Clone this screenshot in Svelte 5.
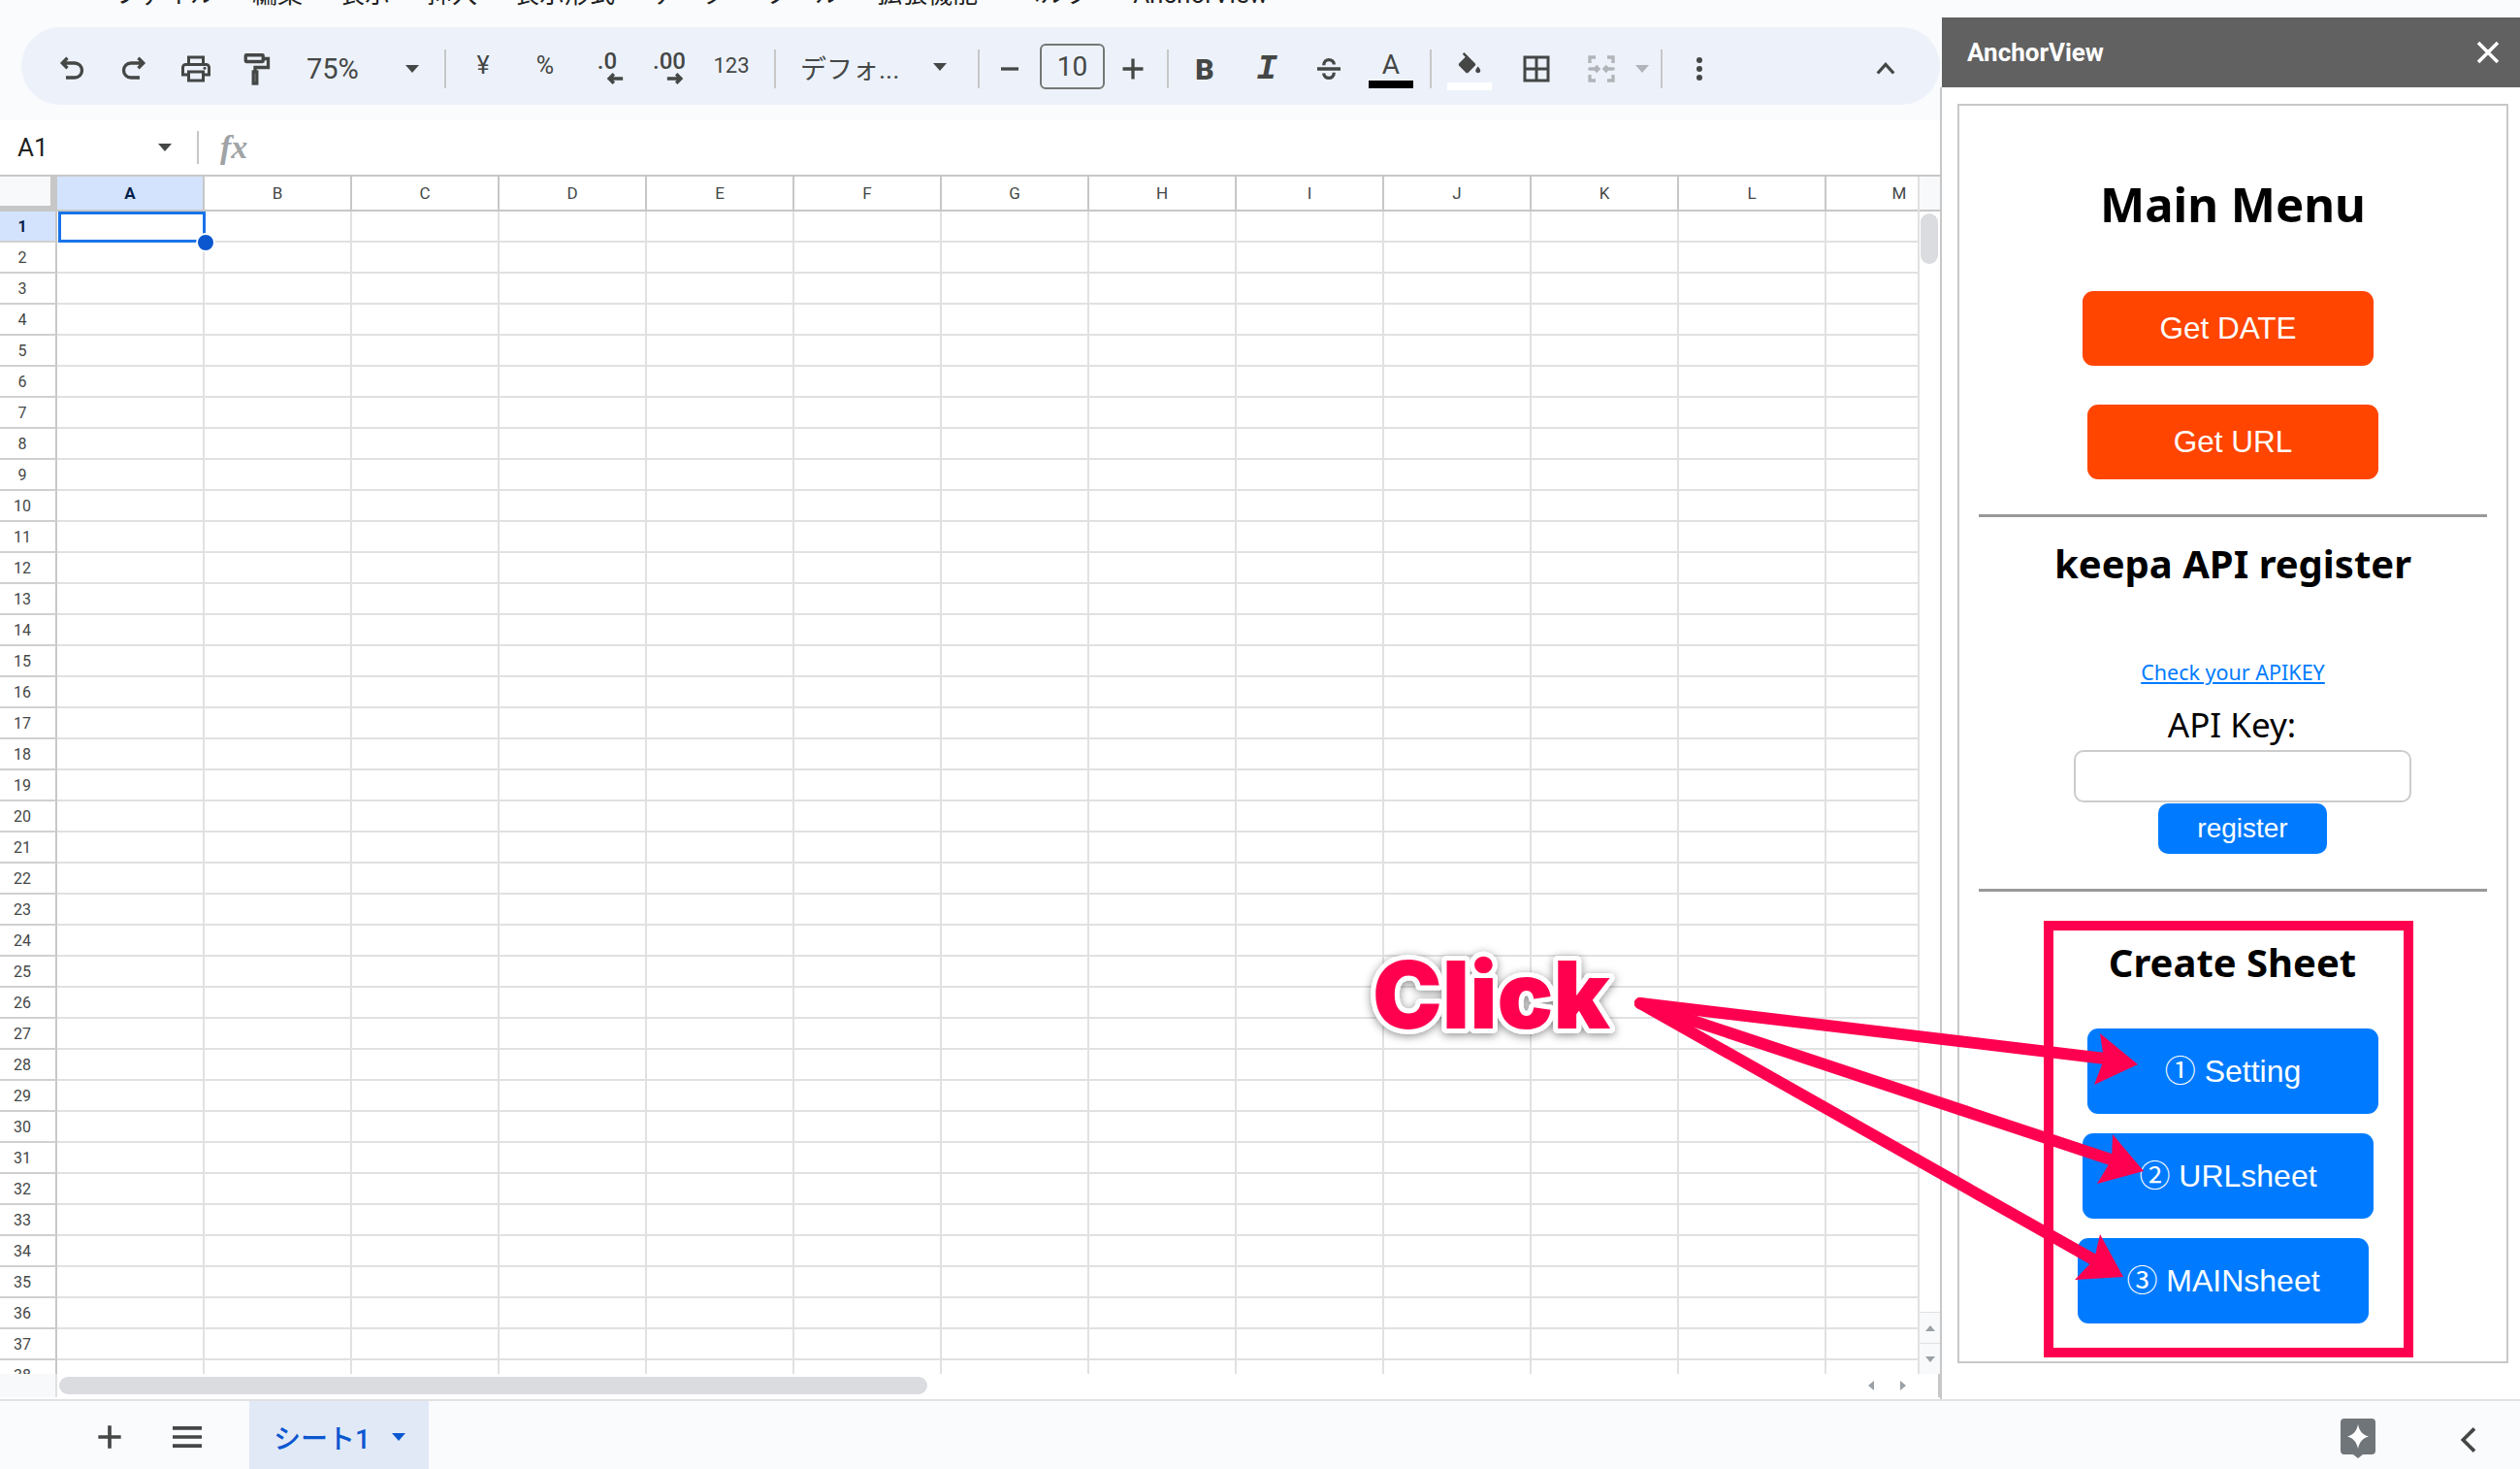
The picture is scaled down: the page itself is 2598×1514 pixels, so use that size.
<script lang="ts">
  const menus = ['ファイル', '編集', '表示', '挿入', '表示形式', 'データ', 'ツール', '拡張機能', 'ヘルプ', 'AnchorView'];
  const columns = 'ABCDEFGHIJKLM'.split('');
  const rows = Array.from({ length: 38 }, (_, i) => i + 1);
  const sheetButtons = [
    { label: '① Setting', cls: 'offset-a' },
    { label: '② URLsheet', cls: 'offset-b' },
    { label: '③ MAINsheet', cls: 'offset-c' }
  ];
</script>

<div class="app">
  <div class="main">
    <div class="sheet">
      <div class="top">
        <div class="menu">
          {#each menus as menu}
            <span>{menu}</span>
          {/each}
        </div>
        <div class="toolbar">
          <button class="tool">
            <svg viewBox="0 0 24 24" class="stroke"><path d="M9 4.500 5.500 8 9 11.500M5.500 8H14a5 5 0 0 1 0 10H8" /></svg>
          </button>
          <button class="tool">
            <svg viewBox="0 0 24 24" class="stroke"><path d="M15 4.500 18.500 8 15 11.500M18.500 8H10a5 5 0 0 0 0 10h6" /></svg>
          </button>
          <button class="tool">
            <svg viewBox="0 0 24 24" class="fill"><path d="M19 8h-1V3H6v5H5c-1.660 0-3 1.340-3 3v6h4v4h12v-4h4v-6c0-1.660-1.340-3-3-3zM8 5h8v3H8V5zm8 12v2H8v-4h8v2zm2-2v-2H6v2H4v-4c0-.550.450-1 1-1h14c.550 0 1 .450 1 1v4h-2z" /><circle cx="18" cy="11.500" r="1" /></svg>
          </button>
          <button class="tool">
            <svg viewBox="0 0 24 24" class="stroke"><rect x="3.500" y="2.500" width="12" height="4.500" rx="0.500" /><path d="M15.500 5h3.500v6h-9v3" /><rect x="8.800" y="14" width="2.400" height="8" /></svg>
          </button>
          <div class="zoom-select"><span>75%</span><i class="tri"></i></div>
          <i class="sep"></i>
          <button class="tool text">¥</button>
          <button class="tool text">%</button>
          <button class="tool stack">
            <span>.0</span>
            <svg viewBox="0 0 24 12" class="stroke arrow left"><path d="M19 6H7M11 2 7 6l4 4" /></svg>
          </button>
          <button class="tool stack">
            <span>.00</span>
            <svg viewBox="0 0 24 12" class="stroke arrow right"><path d="M5 6h12M13 2l4 4-4 4" /></svg>
          </button>
          <button class="tool text small">123</button>
          <i class="sep"></i>
          <div class="font-select"><span>デフォ...</span><i class="tri"></i></div>
          <i class="sep wide"></i>
          <button class="step">
            <svg viewBox="0 0 24 24" class="stroke"><path d="M6 12h12" /></svg>
          </button>
          <div class="size-box">10</div>
          <button class="step">
            <svg viewBox="0 0 24 24" class="stroke"><path d="M5 12h14M12 5v14" /></svg>
          </button>
          <i class="sep"></i>
          <button class="tool bold">B</button>
          <button class="tool italic">I</button>
          <button class="tool">
            <svg viewBox="0 0 24 24" class="stroke"><path d="M4 12h16M8.500 9.500C8.500 4.500 15.500 4.500 15.500 9M8.500 15c0 4.500 7 4.500 7-.5" /></svg>
          </button>
          <button class="tool color">
            <span>A</span>
            <i class="swatch black"></i>
          </button>
          <i class="sep short"></i>
          <button class="tool color">
            <svg viewBox="0 0 24 24" class="fill bucket"><path d="M16.560 8.940 7.620 0 6.210 1.410l2.380 2.380-5.150 5.150c-.590.590-.590 1.540 0 2.120l5.500 5.500c.290.290.680.440 1.060.440s.770-.150 1.060-.440l5.500-5.500c.590-.580.590-1.530 0-2.120zM19 11.500s-2 2.170-2 3.500c0 1.100.900 2 2 2s2-.900 2-2c0-1.330-2-3.500-2-3.500z" /></svg>
            <i class="swatch white"></i>
          </button>
          <button class="tool borders">
            <svg viewBox="0 0 24 24" class="fill"><path d="M3 3v18h18V3H3zm8 16H5v-6h6v6zm0-8H5V5h6v6zm8 8h-6v-6h6v6zm0-8h-6V5h6v6z" /></svg>
          </button>
          <button class="tool merge">
            <svg viewBox="0 0 24 24" class="stroke muted"><path d="M4 8V4h4M16 4h4v4M4 16v4h4M16 20h4v-4M4 11v2M20 11v2M4 12h6M8 10l2 2-2 2M20 12h-6M16 10l-2 2 2 2" /></svg>
          </button>
          <i class="tri muted-tri"></i>
          <i class="sep"></i>
          <button class="tool">
            <svg viewBox="0 0 24 24" class="fill"><circle cx="12" cy="6" r="2" /><circle cx="12" cy="12" r="2" /><circle cx="12" cy="18" r="2" /></svg>
          </button>
          <button class="tool collapse">
            <svg viewBox="0 0 24 24" class="stroke"><path d="M6.500 15 12 9l5.500 6" /></svg>
          </button>
        </div>
      </div>

      <div class="formula">
        <span class="cell-name">A1</span>
        <i class="tri"></i>
        <i class="sep formula-sep"></i>
        <span class="fx">fx</span>
      </div>

      <div class="grid">
        <div class="cells">
          <div class="row head">
            <div class="corner"></div>
            {#each columns as col, i}
              <div class="col-head" class:active={i === 0}>{col}</div>
            {/each}
          </div>
          {#each rows as row}
            <div class="row">
              <div class="row-head" class:active={row === 1}>{row}</div>
              {#each columns as col}
                <div class="cell"></div>
              {/each}
            </div>
          {/each}
          <div class="selection"></div>
          <div class="handle"></div>
        </div>
        <div class="vscroll">
          <div class="vcorner"></div>
          <div class="vthumb"></div>
          <div class="varrows">
            <span><i class="up"></i></span>
            <span><i class="down"></i></span>
          </div>
        </div>
      </div>

      <div class="hscroll">
        <div class="hcorner"></div>
        <div class="hthumb"></div>
        <div class="harrows">
          <i class="back"></i>
          <i class="forward"></i>
        </div>
      </div>
    </div>

    <aside class="side">
      <header class="side-head">
        <span>AnchorView</span>
        <svg viewBox="0 0 24 24"><path d="M2 2l20 20M22 2 2 22" /></svg>
      </header>
      <div class="side-body">
        <div class="card">
          <h1>Main Menu</h1>
          <button class="btn orange first">Get DATE</button>
          <button class="btn orange second">Get URL</button>
          <hr class="rule-one" />
          <h2 class="keepa">keepa API register</h2>
          <a class="key-link" href="#top">Check your APIKEY</a>
          <label class="key-label" for="key">API Key:</label>
          <input id="key" class="key-input" type="text" />
          <button class="register">register</button>
          <hr class="rule-two" />
          <section class="create">
            <h2>Create Sheet</h2>
            {#each sheetButtons as item}
              <button class="btn blue {item.cls}">{item.label}</button>
            {/each}
          </section>
        </div>
      </div>
    </aside>
  </div>

  <footer class="tabs">
    <button class="tab-icon plus">
      <svg viewBox="0 0 24 24" class="stroke"><path d="M5 12h14M12 5v14" /></svg>
    </button>
    <button class="tab-icon list">
      <svg viewBox="0 0 24 24" class="stroke"><path d="M3 6.500h18M3 12h18M3 17.500h18" /></svg>
    </button>
    <div class="tab">
      <span>シート1</span>
      <i class="tab-tri"></i>
    </div>
    <div class="keep">
      <svg viewBox="0 0 36 41"><path d="M4 0h28a4 4 0 0 1 4 4v29a4 4 0 0 1-4 4h-9l-5 4-5-4H4a4 4 0 0 1-4-4V4a4 4 0 0 1 4-4z" fill="#70757a" /><path d="M18 6c1.500 7 4.500 10.500 11 12.500-6.500 2-9.500 5.500-11 12.500-1.500-7-4.500-10.500-11-12.500C13.500 16.500 16.500 13 18 6z" fill="#fff" /></svg>
    </div>
    <button class="tab-icon chevron">
      <svg viewBox="0 0 24 24" class="stroke"><path d="M15 5 8 12l7 7" /></svg>
    </button>
  </footer>

  <svg class="overlay" viewBox="0 0 2598 1514">
    <defs>
      <filter id="soft" x="-10%" y="-20%" width="120%" height="140%">
        <feDropShadow dx="0" dy="2" stdDeviation="5" flood-color="#000" flood-opacity="0.45" />
      </filter>
    </defs>
    <text class="click" x="1415" y="1060" filter="url(#soft)">Click</text>
    <g fill="#ff0050" stroke="none">
      <path d="M1691 1034 2170 1091" stroke="#ff0050" stroke-width="12" stroke-linecap="round" />
      <path d="M1691 1034 2176 1195" stroke="#ff0050" stroke-width="12" stroke-linecap="round" />
      <path d="M1691 1034 2158 1298" stroke="#ff0050" stroke-width="12" stroke-linecap="round" />
      <polygon points="2204,1097 2165,1065 2169,1092 2159,1118" />
      <polygon points="2210,1207 2178,1169 2177,1195 2162,1220" />
      <polygon points="2189,1316 2165,1272 2159,1298 2139,1319" />
    </g>
  </svg>
</div>

<style>
  :global(body) {
    margin: 0;
    background: #fff;
  }

  .app {
    position: relative;
    width: 2598px;
    height: 1514px;
    overflow: hidden;
    font-family: Roboto, "Noto Sans CJK JP", sans-serif;
    color: #444746;
  }

  button {
    border: none;
    background: none;
    padding: 0;
    margin: 0;
    font-family: inherit;
    color: inherit;
  }

  .main {
    display: flex;
    height: 1442px;
  }

  .sheet {
    width: 2000px;
    flex-shrink: 0;
  }

  .top {
    background: #f9fbfd;
    height: 124px;
  }

  .menu {
    display: flex;
    align-items: flex-end;
    gap: 38px;
    height: 12px;
    padding: 0 0 16px 118px;
    overflow: hidden;
    font-size: 26px;
    line-height: 36px;
    color: #1f1f1f;
    white-space: nowrap;
  }

  .menu span:last-child {
    margin-left: 6px;
  }

  .toolbar {
    display: flex;
    align-items: center;
    height: 80px;
    margin-left: 22px;
    padding: 6px 0 0 20px;
    background: #edf2fa;
    border-radius: 40px;
    box-sizing: border-box;
  }

  .tool {
    display: flex;
    align-items: center;
    justify-content: center;
    width: 64px;
    height: 64px;
    flex-shrink: 0;
    font-size: 25px;
  }

  svg {
    display: block;
  }

  .tool svg,
  .step svg {
    width: 36px;
    height: 36px;
  }

  .stroke {
    fill: none;
    stroke: #444746;
    stroke-width: 2.200;
  }

  .fill {
    fill: #444746;
  }

  .muted {
    stroke: #b1b4b8;
  }

  .tri {
    display: block;
    width: 0;
    height: 0;
    border-left: 7px solid transparent;
    border-right: 7px solid transparent;
    border-top: 8px solid #444746;
    flex-shrink: 0;
  }

  .muted-tri {
    border-top-color: #b1b4b8;
    margin: 0 0 0 3px;
  }

  .sep {
    display: block;
    width: 2px;
    height: 40px;
    background: #c7c7c7;
    margin: 0 6px 0 12px;
    flex-shrink: 0;
  }

  .sep.wide {
    margin-right: 8px;
  }

  .sep.short {
    margin: 0 7px 0 8px;
  }

  .zoom-select {
    display: flex;
    align-items: center;
    justify-content: space-between;
    width: 148px;
    box-sizing: border-box;
    padding: 0 14px 0 18px;
    font-size: 29px;
  }

  .text {
    padding-bottom: 8px;
  }

  .small {
    font-size: 22px;
  }

  .stack {
    flex-direction: column;
    font-size: 24px;
    line-height: 22px;
    padding-bottom: 2px;
    font-weight: 500;
  }

  .stack .arrow {
    width: 28px;
    height: 14px;
    stroke-width: 3;
  }

  .arrow.left {
    margin-left: 16px;
  }

  .arrow.right {
    margin-left: 12px;
  }

  .font-select {
    display: flex;
    align-items: center;
    justify-content: space-between;
    width: 190px;
    box-sizing: border-box;
    padding: 0 20px 0 19px;
    font-size: 27px;
    padding-bottom: 4px;
    white-space: nowrap;
  }

  .step {
    width: 46px;
    height: 64px;
    display: flex;
    align-items: center;
    justify-content: center;
    flex-shrink: 0;
  }

  .size-box {
    width: 67px;
    height: 47px;
    margin: -6px 6px 0 8px;
    box-sizing: border-box;
    border: 2px solid #747775;
    border-radius: 6px;
    display: flex;
    align-items: center;
    justify-content: center;
    font-size: 28px;
    flex-shrink: 0;
  }

  .bold {
    font-family: Roboto, sans-serif;
    font-weight: 900;
    font-size: 30px;
    margin-left: -1px;
  }

  .italic {
    font-family: "Liberation Mono", monospace;
    font-style: italic;
    font-weight: 700;
    font-size: 36px;
  }

  .color {
    flex-direction: column;
    font-size: 28px;
    line-height: 24px;
    gap: 4px;
    padding-top: 4px;
  }

  .tool .bucket {
    width: 30px;
    height: 30px;
    margin-bottom: -3px;
  }

  .swatch {
    display: block;
    width: 46px;
    height: 8px;
  }

  .black {
    background: #000;
  }

  .white {
    background: #fff;
  }

  .borders {
    margin-left: 5px;
  }

  .merge {
    margin-left: 3px;
  }

  .collapse {
    margin-left: auto;
    margin-right: 24px;
  }

  .formula {
    display: flex;
    align-items: center;
    height: 56px;
    box-sizing: border-box;
    padding-left: 18px;
  }

  .cell-name {
    width: 145px;
    font-size: 26px;
    color: #1f1f1f;
  }

  .formula-sep {
    height: 34px;
    margin: 0 22px 0 26px;
  }

  .fx {
    font-family: "Liberation Serif", serif;
    font-style: italic;
    font-weight: 700;
    font-size: 34px;
    color: #a0a3a6;
  }

  .grid {
    display: flex;
    height: 1236px;
    overflow: hidden;
    border-top: 2px solid #c7c7c7;
    box-sizing: border-box;
  }

  .cells {
    position: relative;
    width: 1977px;
    overflow: hidden;
    flex-shrink: 0;
  }

  .row {
    display: flex;
    height: 32px;
    box-sizing: border-box;
  }

  .row.head {
    height: 36px;
  }

  .corner {
    width: 59px;
    flex-shrink: 0;
    box-sizing: border-box;
    background: #f8f9fa;
    border-right: 7px solid #c7c7c7;
    border-bottom: 6px solid #c7c7c7;
  }

  .col-head {
    width: 152px;
    flex-shrink: 0;
    box-sizing: border-box;
    display: flex;
    align-items: center;
    justify-content: center;
    border-right: 2px solid #c7c7c7;
    border-bottom: 2px solid #c7c7c7;
    font-size: 17px;
    color: #444746;
  }

  .row-head {
    width: 59px;
    flex-shrink: 0;
    box-sizing: border-box;
    display: flex;
    align-items: center;
    justify-content: center;
    padding-right: 11px;
    border-right: 2px solid #c7c7c7;
    border-bottom: 2px solid #d0d0d0;
    font-size: 16px;
    color: #444746;
  }

  .active {
    background: #d3e3fd;
    color: #041e49;
    font-weight: 700;
  }

  .cell {
    width: 152px;
    flex-shrink: 0;
    box-sizing: border-box;
    border-right: 2px solid #e1e1e1;
    border-bottom: 2px solid #e1e1e1;
  }

  .selection {
    position: absolute;
    left: 60px;
    top: 36px;
    width: 152px;
    height: 32px;
    box-sizing: border-box;
    border: 3px solid #1a73e8;
  }

  .handle {
    position: absolute;
    left: 202px;
    top: 58px;
    width: 16px;
    height: 16px;
    box-sizing: content-box;
    border: 2px solid #fff;
    border-radius: 50%;
    background: #0b57d0;
  }

  .vscroll {
    display: flex;
    flex-direction: column;
    width: 23px;
    box-sizing: border-box;
    border-left: 2px solid #e1e1e1;
  }

  .vcorner {
    height: 36px;
    background: #f8f9fa;
    border-bottom: 2px solid #c7c7c7;
    box-sizing: border-box;
    flex-shrink: 0;
  }

  .vthumb {
    width: 18px;
    height: 52px;
    margin: 2px 0 0 1px;
    border-radius: 9px;
    background: #dadce0;
    flex-shrink: 0;
  }

  .varrows {
    margin-top: auto;
    display: flex;
    flex-direction: column;
  }

  .varrows span {
    height: 32px;
    display: flex;
    align-items: center;
    justify-content: center;
    background: #f8f9fa;
    border-top: 1px solid #e1e1e1;
    box-sizing: border-box;
  }

  .up,
  .down {
    width: 0;
    height: 0;
    border-left: 5px solid transparent;
    border-right: 5px solid transparent;
  }

  .up {
    border-bottom: 6px solid #9aa0a6;
  }

  .down {
    border-top: 6px solid #9aa0a6;
  }

  .hscroll {
    display: flex;
    align-items: center;
    height: 24px;
    background: #fff;
    border-right: 2px solid #c7c7c7;
    box-sizing: border-box;
    width: 2000px;
  }

  .hcorner {
    width: 59px;
    height: 24px;
    box-sizing: border-box;
    background: #f8f9fa;
    border-right: 2px solid #e1e1e1;
    flex-shrink: 0;
  }

  .hthumb {
    width: 895px;
    height: 18px;
    margin-left: 2px;
    border-radius: 9px;
    background: #dadce0;
  }

  .harrows {
    display: flex;
    align-items: center;
    gap: 27px;
    margin-left: auto;
    margin-right: 33px;
  }

  .back,
  .forward {
    width: 0;
    height: 0;
    border-top: 5px solid transparent;
    border-bottom: 5px solid transparent;
  }

  .back {
    border-right: 6px solid #9aa0a6;
  }

  .forward {
    border-left: 6px solid #9aa0a6;
  }

  .side {
    flex: 1;
    display: flex;
    flex-direction: column;
    padding-top: 18px;
    background: #f9fbfd;
  }

  .side-head {
    display: flex;
    align-items: center;
    justify-content: space-between;
    height: 72px;
    box-sizing: border-box;
    padding: 0 21px 0 26px;
    margin-left: 2px;
    background: #616161;
    color: #fff;
    font-size: 26px;
    font-weight: 700;
    flex-shrink: 0;
  }

  .side-head svg {
    width: 24px;
    height: 24px;
    fill: none;
    stroke: #fff;
    stroke-width: 3.500;
  }

  .side-body {
    flex: 1;
    background: #fff;
    padding: 17px 12px 0 16px;
    border-left: 2px solid #c7c7c7;
  }

  .card {
    height: 1298px;
    box-sizing: border-box;
    border: 2px solid #c8c8c8;
    font-family: "Noto Sans", "Noto Sans CJK JP", sans-serif;
    color: #000;
  }

  h1 {
    margin: 71px 0 0;
    font-size: 49px;
    line-height: 60px;
    font-weight: 700;
    text-align: center;
  }

  h2 {
    margin: 0;
    font-size: 40px;
    line-height: 50px;
    font-weight: 700;
    text-align: center;
  }

  .btn {
    display: block;
    width: 300px;
    border-radius: 11px;
    font-family: "Liberation Sans", "Noto Sans CJK JP", sans-serif;
    color: #fff;
    font-size: 31.500px;
  }

  .orange {
    height: 77px;
    background: #ff4500;
  }

  .first {
    margin: 60px 0 0 127px;
  }

  .second {
    margin: 40px 0 0 132px;
  }

  hr {
    height: 3px;
    border: none;
    background: #999;
    margin: 0 20px;
  }

  .rule-one {
    margin-top: 36px;
  }

  .keepa {
    margin-top: 23px;
  }

  .key-link {
    display: block;
    margin-top: 72px;
    line-height: 30px;
    font-size: 21.500px;
    color: #007bff;
    text-align: center;
  }

  .key-label {
    display: block;
    margin-top: 19px;
    padding-right: 2px;
    line-height: 40px;
    font-size: 35px;
    text-align: center;
  }

  .key-input {
    display: block;
    width: 348px;
    height: 54px;
    box-sizing: border-box;
    margin: 6px 0 0 118px;
    border: 2px solid #ccc;
    border-radius: 10px;
    background: #fff;
  }

  .register {
    display: block;
    width: 174px;
    height: 52px;
    margin: 1px 0 0 205px;
    border-radius: 10px;
    background: #007bff;
    color: #fff;
    font-family: "Liberation Sans", sans-serif;
    font-size: 28px;
  }

  .rule-two {
    margin-top: 36px;
  }

  .create {
    width: 381px;
    box-sizing: border-box;
    margin: 30px 0 0 87px;
    padding: 8px 0 25px;
    border: 10px solid #ff0050;
  }

  .create h2 {
    padding-left: 8px;
  }

  .blue {
    height: 88px;
    padding-bottom: 6px;
    background: #007bff;
    font-size: 32px;
  }

  .offset-a {
    margin: 43px 0 0 35px;
  }

  .offset-b {
    margin: 20px 0 0 30px;
  }

  .offset-c {
    margin: 20px 0 0 25px;
  }

  .tabs {
    display: flex;
    align-items: center;
    height: 72px;
    box-sizing: border-box;
    border-top: 2px solid #e1e1e1;
    background: #f9fbfd;
    padding-left: 93px;
  }

  .tab-icon {
    width: 40px;
    height: 40px;
    flex-shrink: 0;
    margin-top: 4px;
  }

  .tab-icon svg {
    width: 40px;
    height: 40px;
  }

  .list {
    margin-left: 40px;
  }

  .tab {
    display: flex;
    align-items: center;
    gap: 22px;
    align-self: stretch;
    width: 185px;
    box-sizing: border-box;
    margin-left: 44px;
    padding: 4px 0 0 25px;
    background: #e1e9f7;
    color: #0b57d0;
    font-size: 28px;
    font-weight: 500;
  }

  .tab-tri {
    width: 0;
    height: 0;
    border-left: 7px solid transparent;
    border-right: 7px solid transparent;
    border-top: 8px solid #0b57d0;
  }

  .keep {
    margin-left: auto;
    margin-top: 6px;
  }

  .keep svg {
    width: 36px;
    height: 41px;
  }

  .tab-icon.chevron {
    margin: 10px 32px 0 77px;
  }

  .overlay {
    position: absolute;
    left: 0;
    top: 0;
    width: 2598px;
    height: 1514px;
    pointer-events: none;
  }

  .click {
    font-family: Inter, sans-serif;
    font-weight: 900;
    font-size: 96px;
    fill: #ff0050;
    stroke: #fff;
    stroke-width: 10px;
    paint-order: stroke;
    stroke-linejoin: round;
  }
</style>
